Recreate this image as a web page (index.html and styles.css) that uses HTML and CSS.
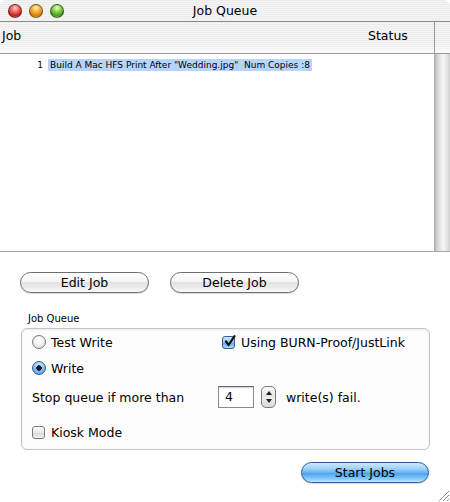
FILE: index.html
```html
<!DOCTYPE html>
<html>

<head>
    <meta charset="UTF-8">
    <title>Job Queue</title>
    <link rel="stylesheet" href="styles.css">
</head>

<body>
    <div class="window">
        <!-- Title bar -->
        <div class="titlebar">
            <div class="lights">
                <span class="light red"></span>
                <span class="light orange"></span>
                <span class="light green"></span>
            </div>
            <div class="title">Job Queue</div>
        </div>

        <!-- Job list -->
        <div class="thead">
            <div class="col-job">Job</div>
            <div class="col-status">Status</div>
            <div class="corner"></div>
        </div>
        <div class="tbody">
            <ul class="rows">
                <li class="row">
                    <span class="num">1</span>
                    <span class="job-name selected">Build A Mac HFS Print After "Wedding.jpg"&nbsp; Num Copies :8</span>
                </li>
            </ul>
            <div class="scrollbar"></div>
        </div>

        <div class="actions">
            <button class="aqua-btn">Edit Job</button>
            <button class="aqua-btn">Delete Job</button>
        </div>

        <!-- Options group -->
        <div class="group-label">Job Queue</div>
        <div class="group">
            <div class="opt-row">
                <label class="opt col-a"><span class="radio"></span>Test Write</label>
                <label class="opt">
                    <span class="check checked">
                        <svg width="13" height="13" viewBox="0 0 13 13">
                            <path d="M3 6.5 L5.6 10 L11.5 1.2" fill="none" stroke="#111" stroke-width="2.2" stroke-linecap="round" stroke-linejoin="round" />
                        </svg>
                    </span>Using BURN-Proof/JustLink
                </label>
            </div>
            <div class="opt-row">
                <label class="opt"><span class="radio on"></span>Write</label>
            </div>
            <div class="opt-row stop-row">
                <span class="stop-text">Stop queue if more than</span>
                <span class="num-field">4</span>
                <span class="stepper">
                    <span class="arrow up"></span>
                    <span class="arrow down"></span>
                </span>
                <span class="fail-text">write(s) fail.</span>
            </div>
            <div class="opt-row kiosk-row">
                <label class="opt"><span class="check"></span>Kiosk Mode</label>
            </div>
        </div>

        <div class="footer">
            <button class="aqua-btn blue">Start Jobs</button>
        </div>

        <svg class="grip" width="14" height="14" viewBox="0 0 14 14">
            <path d="M13 3 L3 13 M13 7 L7 13 M13 11 L11 13" stroke="#8c8c8c" stroke-width="1" />
            <path d="M13 4 L4 13 M13 8 L8 13" stroke="#fff" stroke-width="1" />
        </svg>
    </div>
</body>

</html>
```

FILE: styles.css
```css
/* Page */
body {
    margin: 0;
    background: #fff;
    font-family: "DejaVu Sans", "Noto Sans", sans-serif;
    color: #000;
}

.window {
    position: relative;
    width: 450px;
    height: 502px;
    overflow: hidden;
    background: #fff;
    border-radius: 6px 6px 0 0;
}

/* Title bar */
.titlebar {
    height: 21px;
    display: flex;
    align-items: center;
    position: relative;
    border-bottom: 1px solid #8e8e8e;
    background:
        repeating-linear-gradient(to bottom, #ececec 0, #ececec 1px, #f4f4f4 1px, #f4f4f4 2px);
}

.lights {
    display: flex;
    gap: 7px;
    padding-left: 8px;
    z-index: 1;
}

.light {
    width: 14px;
    height: 14px;
    border-radius: 50%;
    box-sizing: border-box;
    border: 1px solid rgba(0, 0, 0, 0.45);
}

.light.red {
    background: radial-gradient(circle at 50% 25%, #ffd3cf 0, #f27a70 30%, #c8231a 70%, #f0685e 100%);
}

.light.orange {
    background: radial-gradient(circle at 50% 25%, #fff1c8 0, #f9bd4c 30%, #d7800c 70%, #f6b24a 100%);
}

.light.green {
    background: radial-gradient(circle at 50% 25%, #e5ffd0 0, #98dc5a 30%, #449c1c 70%, #8fd65a 100%);
}

.title {
    position: absolute;
    left: 0;
    right: 0;
    text-align: center;
    font-size: 12.5px;
    line-height: 21px;
}

/* Table header */
.thead {
    display: flex;
    height: 31px;
    border-bottom: 1px solid #9a9a9a;
    font-size: 12.5px;
    background:
        linear-gradient(to bottom, rgba(255, 255, 255, 0) 70%, rgba(255, 255, 255, 0.7) 100%),
        repeating-linear-gradient(to bottom, #ececec 0, #ececec 1px, #f5f5f5 1px, #f5f5f5 2px);
}

.col-job {
    flex: 1;
    padding-left: 2px;
    line-height: 28px;
}

.col-status {
    width: 66px;
    line-height: 28px;
}

.corner {
    width: 15px;
    border-left: 1px solid #9a9a9a;
}

/* Table body */
.tbody {
    display: flex;
    height: 197px;
    border-bottom: 1px solid #a8a8a8;
}

.rows {
    flex: 1;
    list-style: none;
    margin: 0;
    padding: 5px 0 0 0;
}

.row {
    display: flex;
    height: 12px;
    font-size: 9px;
    line-height: 12px;
}

.num {
    width: 43px;
    text-align: right;
    padding-right: 5px;
}

.selected {
    background: #b5d5ff;
    padding: 0 2px;
}

.scrollbar {
    width: 15px;
    border-left: 1px solid #b0b0b0;
    background: linear-gradient(to right, #bdbdbd, #dedede 25%, #f6f6f6 55%, #e6e6e6 80%, #cfcfcf);
}

/* Buttons */
.actions {
    display: flex;
    gap: 21px;
    padding: 20px 0 0 20px;
}

.aqua-btn {
    width: 129px;
    height: 21px;
    padding: 0;
    font-family: "DejaVu Sans", sans-serif;
    font-size: 12.5px;
    color: #000;
    border: 1px solid #6e6e6e;
    border-radius: 11px;
    background: linear-gradient(to bottom, #ffffff 0, #f4f4f4 45%, #e2e2e2 50%, #ebebeb 75%, #fbfbfb 100%);
    box-shadow: 0 1px 1px rgba(0, 0, 0, 0.15);
}

.aqua-btn.blue {
    width: 128px;
    border-color: #2d5b95;
    background: linear-gradient(to bottom, #cfe8fc 0, #9fd0f8 30%, #6bb3f0 50%, #4ea4ee 55%, #86cdfb 85%, #bff0ff 100%);
}

/* Group box */
.group-label {
    font-size: 10px;
    padding: 19px 0 0 28px;
    line-height: 14px;
}

.group {
    margin: 2px 20px 0 21px;
    height: 115px;
    border: 1px solid #c4c4c4;
    border-radius: 6px;
    background: #fcfcfc;
    box-shadow: inset 0 1px 2px rgba(0, 0, 0, 0.08);
    padding: 5px 0 0 10px;
    font-size: 12.5px;
}

.opt-row {
    display: flex;
    align-items: center;
    height: 16px;
    margin-bottom: 10px;
}

.opt {
    display: flex;
    align-items: center;
}

.col-a {
    width: 190px;
}

.radio {
    width: 14px;
    height: 14px;
    box-sizing: border-box;
    border-radius: 50%;
    border: 1px solid #7a7a7a;
    margin-right: 5px;
    background: radial-gradient(circle at 50% 35%, #ffffff 0, #f0f0f0 50%, #cfcfcf 100%);
}

.radio.on {
    border-color: #3a5d8c;
    background:
        radial-gradient(circle at 50% 50%, #1a1a2a 0, #1a1a2a 2.5px, transparent 3px),
        radial-gradient(circle at 50% 30%, #e3f1ff 0, #8cc4f5 45%, #3f8fe0 100%);
}

.check {
    width: 13px;
    height: 13px;
    box-sizing: border-box;
    border: 1px solid #7a7a7a;
    border-radius: 3px;
    margin-right: 6px;
    background: linear-gradient(to bottom, #ffffff, #e8e8e8 50%, #d6d6d6 51%, #f4f4f4);
    position: relative;
}

.check.checked {
    border-color: #3a5d8c;
    background: linear-gradient(to bottom, #d2e9fd, #8ec5f5 50%, #5fa7ec 51%, #a6dcff);
}

.check svg {
    position: absolute;
    left: 0;
    top: -2px;
}

.stop-row {
    height: 22px;
    margin-bottom: 16px;
}

.stop-text {
    width: 186px;
}

.num-field {
    width: 36px;
    height: 22px;
    box-sizing: border-box;
    border: 1px solid #8a8a8a;
    border-top-color: #6a6a6a;
    box-shadow: inset 0 1px 1px rgba(0, 0, 0, 0.2);
    background: #fff;
    padding-left: 6px;
    line-height: 20px;
}

.stepper {
    position: relative;
    width: 15px;
    height: 22px;
    box-sizing: border-box;
    margin-left: 7px;
    border: 1px solid #7a7a7a;
    border-radius: 5px;
    background: linear-gradient(to bottom, #fafafa, #e4e4e4 50%, #f0f0f0 51%, #d8d8d8);
}

.arrow {
    position: absolute;
    left: 4px;
    width: 0;
    height: 0;
    border-left: 3px solid transparent;
    border-right: 3px solid transparent;
}

.arrow.up {
    top: 4px;
    border-bottom: 4px solid #222;
}

.arrow.down {
    bottom: 4px;
    border-top: 4px solid #222;
}

.fail-text {
    margin-left: 10px;
}

.kiosk-row {
    margin-bottom: 0;
}

/* Footer */
.footer {
    display: flex;
    justify-content: flex-end;
    padding: 12px 21px 0 0;
}

.grip {
    position: absolute;
    right: 0;
    bottom: 0;
}
```
